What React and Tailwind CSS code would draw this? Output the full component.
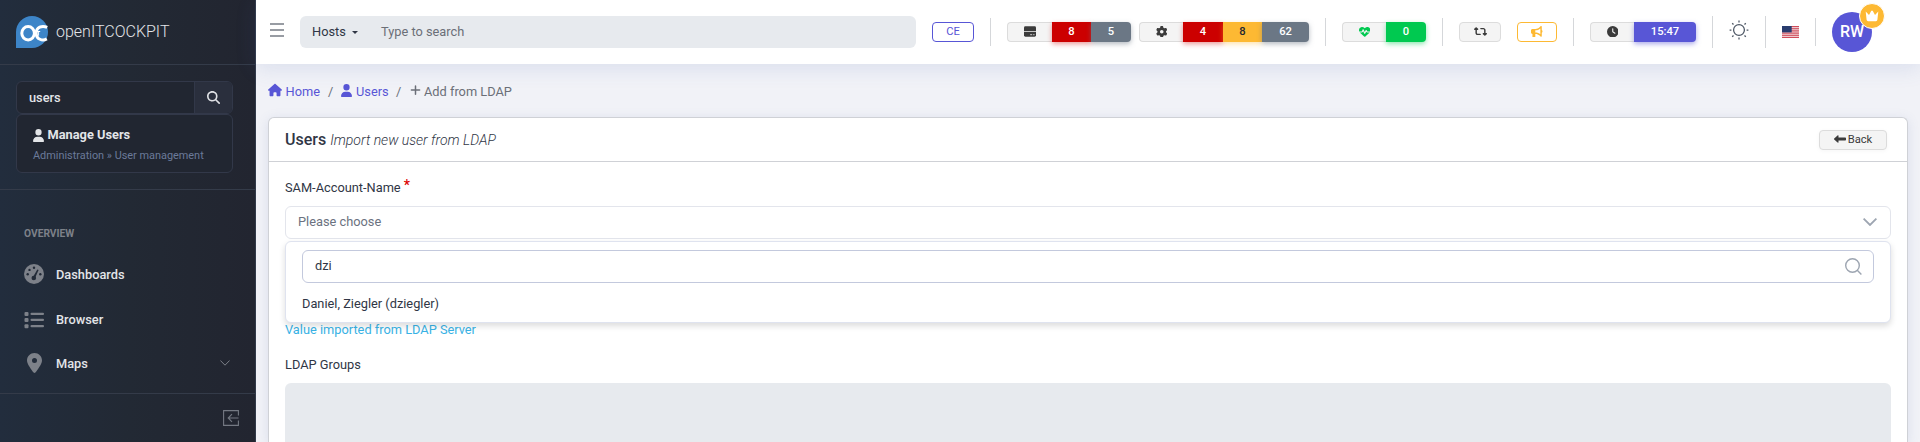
import React from "react";
import {
  FaHouse, FaUser, FaPlus, FaMagnifyingGlass, FaGear, FaLocationDot,
  FaHeartPulse, FaRetweet, FaBullhorn, FaClock, FaLeftLong,
} from "react-icons/fa6";

const Logo = () => (
  <svg className="h-8 w-8 shrink-0" viewBox="0 0 32 32" fill="none">
    <path d="M16 0A16 16 0 0 1 16 32H0V16A16 16 0 0 1 16 0Z" fill="#3d85c8" />
    <ellipse cx="12.1" cy="17.2" rx="6.3" ry="6.7" stroke="#fff" strokeWidth="3" />
    <path d="M31.2 11.4C26 9 20.2 11.2 20.2 17.2C20.200 23.200 26.500 25.400 30.800 22.900" stroke="#fff" strokeWidth="3" />
    <path d="M19.300 14.800v4.600M21 15.500h3.200M22.600 15.500v4.200" stroke="#fff" strokeWidth="1" />
  </svg>
);

const Gauge = () => (
  <svg className="h-5 w-5" viewBox="0 0 20 20">
    <circle cx="10" cy="10" r="10" fill="#7d8189" />
    <g fill="#222a37">
      <circle cx="3.7" cy="10.3" r="1.2" />
      <circle cx="5.5" cy="5.9" r="1.2" />
      <circle cx="10" cy="3.8" r="1.2" />
      <circle cx="16.3" cy="10.3" r="1.2" />
      <circle cx="9.8" cy="14" r="2.3" />
      <path d="M13.3 5.4l1.3.6-3.3 7.4-2-.8z" />
    </g>
  </svg>
);

const ListIcon = () => (
  <svg className="h-5 w-5" viewBox="0 0 20 20" fill="#7d8189">
    <rect x="0.5" y="2" width="4" height="4" rx="1" />
    <rect x="0.5" y="8" width="4" height="4" rx="1" />
    <rect x="0.5" y="14.2" width="4" height="4" rx="1" />
    <rect x="6.5" y="2.8" width="13.5" height="2.3" rx="1" />
    <rect x="6.5" y="8.8" width="13.5" height="2.3" rx="1" />
    <rect x="6.5" y="15" width="13.5" height="2.3" rx="1" />
  </svg>
);

const Drive = () => (
  <svg className="mb-px h-[11px] w-3" viewBox="0 0 12 11">
    <path d="M1.4.3h9.2Q12 .3 12 1.7V5.300H0V1.7Q0 .3 1.4.3Z" fill="#3b3b3b" />
    <path d="M0 6h12v3.3q0 1.4-1.4 1.4H1.4Q0 10.7 0 9.3Z" fill="#3b3b3b" />
    <path d="M6.2 8.7h2M9.2 8.7h1.3" stroke="#f4f4f4" strokeWidth=".8" />
  </svg>
);

const Crown = () => (
  <svg className="h-3 w-[14px]" viewBox="0 0 14 12" fill="#fff">
    <path d="M.7 1.600 4 5 6.300.700h1.400L10 5l3.300-3.400-.9 8.200q-.2 1.400-1.500 1.400H3.100q-1.300 0-1.500-1.400Z" />
  </svg>
);

const Sun = () => (
  <svg className="h-5 w-5" viewBox="0 0 20 20" fill="none" stroke="#4b5563" strokeWidth="1.25">
    <circle cx="10" cy="10" r="5.4" />
    <path d="M10 .6v1.8M10 17.6v1.8M.6 10h1.8M17.6 10h1.8M3.2 3.2l1.3 1.3M15.5 15.5l1.3 1.3M3.2 16.8l1.3-1.3M15.5 4.5l1.3-1.3" />
  </svg>
);

const Flag = () => (
  <svg className="h-3 w-[17px]" viewBox="0 0 17 12" preserveAspectRatio="none">
    <rect width="17" height="12" fill="#f3dfe2" />
    <path d="M0 .5h17M0 2.35h17M0 4.2h17M0 6h17M0 7.8h17M0 9.65h17M0 11.5h17" stroke="#cc4352" strokeWidth=".95" />
    <rect width="9.7" height="6.4" fill="#293c6e" />
  </svg>
);

const NavItem = ({ icon, label, children }) => (
  <div className="flex h-[44.6px] items-center pl-6 pr-[25px]">
    <div className="flex w-5 justify-center">{icon}</div>
    <span className="ml-3 flex-1 text-[12.8px] font-medium text-[#e3e5e8]">{label}</span>
    {children}
  </div>
);

const Divider = ({ tall = false }) => (
  <div className={tall ? "h-8 w-px shrink-0 bg-[#d5d7da]" : "h-7 w-px shrink-0 bg-[#d5d7da]"} />
);

const light = "flex h-5 items-center justify-center border border-[#dcdcdc] bg-[#f4f4f4] text-[#3b3b3b] text-[11.5px]";
const cell = "flex h-5 items-center justify-center pt-px text-[11.2px] font-medium";
const red = "bg-[#cc0000] text-white shadow-[0_2px_5px_rgba(204,0,0,0.4)]";
const grey = "rounded-r bg-[#6b7785] text-white shadow-[0_2px_5px_rgba(107,119,133,0.5)]";

const Sidebar = () => (
  <aside className="flex h-[442px] w-64 shrink-0 flex-col border-r border-[#323a49] bg-linear-to-r from-[#222d3d] via-[#222934] to-[#222530]">
    <div className="flex h-[65px] shrink-0 items-center border-b border-[#343b49] pl-4">
      <Logo />
      <span className="ml-2 text-[16px] font-light text-[#e3e5e8]">openITCOCKPIT</span>
    </div>
    <div className="h-[125px] shrink-0 border-b border-[#343b49] px-4 pt-4">
      <div className="flex h-[33px] w-[217px] rounded-md border border-[#323849] bg-[#212631]">
        <div className="flex flex-1 items-center pl-3 text-[12.8px] font-medium text-[#e3e5e8]">users</div>
        <div className="flex w-[38px] items-center justify-center rounded-r-[5px] border-l border-[#323849] bg-[#2a2f3d] text-[13px] text-[#dfe1e5]">
          <FaMagnifyingGlass />
        </div>
      </div>
      <div className="h-[59px] w-[217px] rounded-md border border-[#323849] bg-[#212631] pl-4 pt-[10px]">
        <div className="flex h-5 items-center gap-[3.5px] text-[12.8px] font-bold text-[#e3e5e8]">
          <FaUser className="h-[13px] w-[11px]" preserveAspectRatio="none" />
          Manage Users
        </div>
        <div className="mt-[3px] text-[10.9px] leading-4 text-[#6b7a99]">Administration » User management</div>
      </div>
    </div>
    <div className="h-[62px] shrink-0 pl-6 pt-9 text-[10.24px] font-bold leading-4 text-[#7d8189]">OVERVIEW</div>
    <div className="h-[141px] shrink-0">
      <NavItem icon={<Gauge />} label="Dashboards" />
      <div className="pt-px">
        <NavItem icon={<ListIcon />} label="Browser" />
      </div>
      <div className="-mt-px">
        <NavItem icon={<FaLocationDot className="h-5 w-[15px] text-[#7d8189]" />} label="Maps">
          <svg className="h-[6px] w-[10px]" viewBox="0 0 10 6" fill="none" stroke="#7d8189"><path d="M.4.5 5 5.2 9.6.5" /></svg>
        </NavItem>
      </div>
    </div>
    <div className="flex flex-1 items-center justify-end border-t border-[#343b49] pr-4">
      <svg className="h-4 w-4" viewBox="0 0 16 16" fill="none" stroke="#747983" strokeWidth="1.1">
        <path d="M15.4 5.5V.6H.6v14.8h14.8v-4.9M15.5 8H5.2M9 4.2 5.2 8 9 11.8" />
      </svg>
    </div>
  </aside>
);

const Header = () => (
  <header className="relative flex h-16 shrink-0 items-center bg-white pl-[14px] shadow-[0_4px_20px_rgba(70,100,180,0.14)]">
    <svg className="mb-1 h-[14px] w-[14px]" viewBox="0 0 14 14" stroke="#323a49" strokeWidth="1.2">
      <path d="M0 1h14M0 7h14M0 13h14" />
    </svg>
    <div className="ml-4 flex h-8 w-[616px] items-center rounded-md bg-[#e7eaee] pl-3 text-[12.8px]">
      <span className="w-[33px] text-[#303645]">Hosts</span>
      <span className="ml-[7px] border-x-[3px] border-t-[3px] border-x-transparent border-t-[#303645]" />
      <span className="ml-[23px] text-[#6b6f78]">Type to search</span>
    </div>
    <div className="ml-4 flex h-5 w-[42px] items-center justify-center rounded border border-[#5856d6] pt-px text-[11.2px] text-[#5856d6]">CE</div>
    <div className="ml-4"><Divider /></div>
    <div className="ml-4 flex">
      <div className={`${light} w-[45px] rounded-l border-r-0`}><Drive /></div>
      <div className={`${cell} ${red} w-[39px]`}>8</div>
      <div className={`${cell} ${grey} w-10`}>5</div>
    </div>
    <div className="ml-2 flex">
      <div className={`${light} w-11 rounded-l border-r-0`}><FaGear className="mb-px h-[11.5px] w-[11.5px]" /></div>
      <div className={`${cell} ${red} w-10`}>4</div>
      <div className={`${cell} w-[39px] bg-[#fdb933] text-[#212631] shadow-[0_2px_5px_rgba(253,185,51,0.4)]`}>8</div>
      <div className={`${cell} ${grey} w-[47px]`}>62</div>
    </div>
    <div className="ml-4"><Divider /></div>
    <div className="ml-4 flex">
      <div className={`${light} w-11 rounded-l border-r-0`}><FaHeartPulse className="mb-px text-[#00c950]" /></div>
      <div className={`${cell} w-10 rounded-r bg-[#00c950] text-white shadow-[0_2px_5px_rgba(0,201,80,0.45)]`}>0</div>
    </div>
    <div className="ml-4"><Divider /></div>
    <div className={`${light} ml-4 w-[42px] rounded`}><FaRetweet className="mb-px h-[13px] w-[13px]" /></div>
    <div className="ml-4 flex h-5 w-10 items-center justify-center rounded border border-[#fdb933] text-[11.5px] text-[#fdb933]"><FaBullhorn className="mb-px" /></div>
    <div className="ml-4"><Divider /></div>
    <div className="ml-4 flex">
      <div className={`${light} w-11 rounded-l border-r-0`}><FaClock className="mb-px" /></div>
      <div className={`${cell} w-[62px] rounded-r bg-[#5856d6] text-white shadow-[0_2px_5px_rgba(88,86,214,0.5)]`}>15:47</div>
    </div>
    <div className="ml-4"><Divider tall /></div>
    <div className="mb-1 ml-4"><Sun /></div>
    <div className="ml-4"><Divider tall /></div>
    <div className="ml-4"><Flag /></div>
    <div className="ml-4"><Divider /></div>
    <div className="relative ml-4 flex h-10 w-10 items-center justify-center rounded-full bg-[#5856d6] text-base font-medium text-white">
      RW
      <div className="absolute -right-[13px] -top-[9px] flex h-[26px] w-[26px] items-center justify-center rounded-full border border-white bg-[#fdb933]">
        <Crown />
      </div>
    </div>
  </header>
);

const Content = () => (
  <main className="flex flex-1 flex-col bg-[#f1f2f7] pl-3 pr-3">
    <nav className="flex h-[53px] shrink-0 items-center pt-[2px] text-[12.8px] text-[#6b6f78]">
      <FaHouse className="mb-[3px] h-[14px] w-[14px] text-[#5856d6]" />
      <span className="ml-[3.5px] w-[34.500px] text-[#5856d6]">Home</span>
      <span className="ml-2 w-[5px]">/</span>
      <FaUser className="mb-[3px] ml-2 h-[13px] w-[11px] text-[#5856d6]" preserveAspectRatio="none" />
      <span className="ml-1 w-8 text-[#5856d6]">Users</span>
      <span className="ml-2 w-[5px]">/</span>
      <FaPlus className="mb-[3px] ml-[9px] h-3 w-[11px]" />
      <span className="ml-[3px]">Add from LDAP</span>
    </nav>
    <section className="w-[1640px] flex-1 rounded-t-md border border-b-0 border-[#cfd1d6] bg-white text-[12.8px] text-[#303645] shadow-[0_2px_12px_rgba(90,110,170,0.15)]">
      <div className="flex h-11 items-center border-b border-[#cfd1d6] pl-4 pr-5">
        <span className="pt-px text-[16px] font-medium">Users</span>
        <span className="ml-[4px] pt-px text-[14px] font-light italic">Import new user from LDAP</span>
        <div className="ml-auto flex h-5 w-[68px] items-center justify-center gap-[2px] rounded border border-[#dcdcdc] bg-[#f4f4f4] text-[11.2px] text-[#3b3b3b] shadow-[0_1px_4px_rgba(0,0,0,0.04)]">
          <FaLeftLong className="mb-px h-[12px] w-[12px]" />
          <span className="pt-px">Back</span>
        </div>
      </div>
      <div className="px-4 pt-[15px]">
        <div className="h-[29px] leading-5">SAM-Account-Name <span className="relative -top-[2px] text-[#dc0000] font-medium text-sm">*</span></div>
        <div className="flex h-[33px] items-center rounded-md border border-[#e3e5ec] pb-px pl-3 pr-[13px] text-[#6b7280]">
          Please choose
          <svg className="ml-auto h-2 w-[14px]" viewBox="0 0 14 8" fill="none" stroke="#9da5b1" strokeWidth="1.8"><path d="M.6.6 7 7 13.4.6" /></svg>
        </div>
        <div className="relative mt-[2px] h-[82px] rounded-md border border-[#dfe3ef] bg-white px-4 pt-2 shadow-[0_3px_6px_rgba(0,0,0,0.14)]">
          <div className="flex h-[33px] items-center rounded-md border border-[#c3c9dd] pb-px pl-3 pr-[11px]">
            dzi
            <svg className="ml-auto h-[17px] w-[17px]" viewBox="0 0 17 17" fill="none" stroke="#9da5b1" strokeWidth="1.4"><circle cx="7.5" cy="7.5" r="6.8" /><path d="m12 12 4.4 4.4" /></svg>
          </div>
          <div className="mt-[11px] leading-5">Daniel, Ziegler (dziegler)</div>
        </div>
        <div className="-mt-[3px] leading-5 text-[#39b2e5]">Value imported from LDAP Server</div>
        <div className="mt-[15px] leading-5">LDAP Groups</div>
        <div className="mt-[8px] h-[59px] rounded-t-md bg-[#e7eaee]" />
      </div>
    </section>
  </main>
);

export default function App() {
  return (
    <div className="flex h-[442px] w-[1920px] overflow-hidden font-['Roboto',sans-serif]">
      <Sidebar />
      <div className="flex w-[1664px] flex-col">
        <Header />
        <Content />
      </div>
    </div>
  );
}
